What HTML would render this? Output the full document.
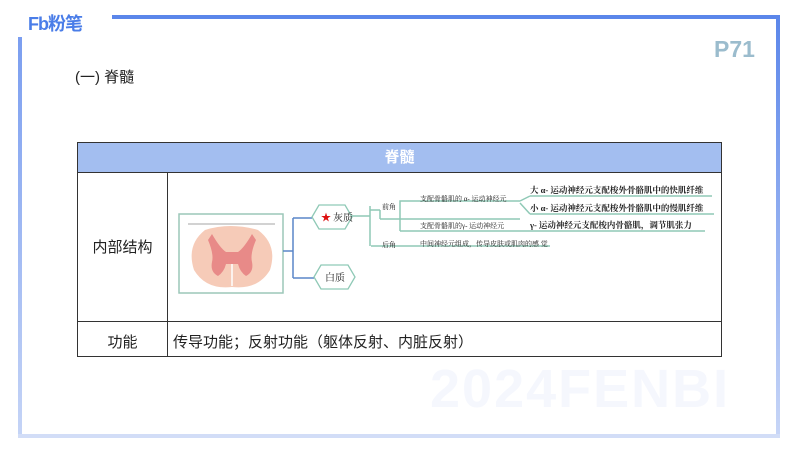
<!DOCTYPE html>
<html><head><meta charset="utf-8"><style>
body{margin:0;width:800px;height:450px;background:#fff;position:relative;overflow:hidden;font-family:"Liberation Sans","Noto Sans CJK SC",sans-serif;}
.a{position:absolute}
</style></head><body>
<div class="a" style="left:430px;top:358px;width:346px;height:70px;overflow:hidden"><div style="font-size:54px;font-weight:bold;color:#f5f7fd;letter-spacing:2px;white-space:nowrap">2024FENBI</div></div>
<div class="a" style="left:112px;top:15px;width:668px;height:4px;background:#5b86ea"></div>
<div class="a" style="left:776px;top:15px;width:4px;height:422px;background:linear-gradient(#5b86ea,#c8d6f7)"></div>
<div class="a" style="left:18px;top:37px;width:4px;height:400px;background:linear-gradient(#7b9ef0,#c5d4f6)"></div>
<div class="a" style="left:18px;top:434px;width:762px;height:4px;background:#d2ddf7"></div>
<div class="a" style="left:28px;top:10px;font-size:18px;font-weight:bold;color:#4a7de8;letter-spacing:-1px">Fb粉笔</div>
<div class="a" style="left:714px;top:36px;font-size:23px;font-weight:bold;color:#9bbccd">P71</div>
<div class="a" style="left:75px;top:66px;font-size:15px;color:#222">(一) 脊髓</div>
<div class="a" style="left:77px;top:142px;width:645px;height:215px;border:1px solid #333;box-sizing:border-box"></div>
<div class="a" style="left:78px;top:143px;width:643px;height:29px;background:#a3bef0;border-bottom:1px solid #333;color:#fff;font-size:15px;font-weight:bold;text-align:center;line-height:29px">脊髓</div>
<div class="a" style="left:167px;top:172px;width:1px;height:185px;background:#333"></div>
<div class="a" style="left:78px;top:321px;width:643px;height:1px;background:#333"></div>
<div class="a" style="left:78px;top:236px;width:89px;text-align:center;font-size:15px;color:#222">内部结构</div>
<div class="a" style="left:78px;top:331px;width:89px;text-align:center;font-size:15px;color:#222">功能</div>
<div class="a" style="left:173px;top:331px;font-size:15px;color:#222">传导功能；反射功能（躯体反射、内脏反射）</div>
<svg class="a" style="left:0;top:0" width="800" height="450">
<rect x="179" y="214" width="104" height="79" fill="#fff" stroke="#9cc7b9" stroke-width="1.5"/>
<line x1="188" y1="224" x2="275" y2="224" stroke="#888" stroke-width="0.8"/>
<path d="M205 230 Q230 222 258 230 Q278 245 270 270 Q258 290 232 287 Q206 290 194 270 Q186 245 205 230Z" fill="#f6cbb8"/>
<path d="M212 234 Q220 248 226 252 L238 252 Q244 248 252 234 L256 240 Q250 254 252 262 Q254 272 246 276 Q240 272 238 264 L226 264 Q224 272 218 276 Q210 272 212 262 Q214 254 208 240Z" fill="#e88a88"/>
<path d="M232 264 L232 286" stroke="#fff" stroke-width="1.5"/>
<g fill="none" stroke-width="1.5">
<path d="M283 251 H293 M293 218 V278 M293 218 H312 M293 278 H314" stroke="#5a86c8"/>
<path d="M352 216 H370 M370 216 V246 M370 206 V216 M370 210 H380 M380 210 V219 M371 246 H550 M380 219 H520 M400 210 V231 M400 231 H515 M400 210 V201 H520 M520 201 L530 196 M520 203 L530 214 M530 196 H712 M530 214 H714 M515 231 H705" stroke="#8fc9b6"/>
</g>
<path d="M312 217 L319 205 H345 L352 217 L345 229 H319Z" fill="#fff" stroke="#8fc9b6" stroke-width="1.3"/>
<path d="M314 277 L321 265 H348 L355 277 L348 289 H321Z" fill="#fff" stroke="#8fc9b6" stroke-width="1.3"/>
<g font-family="Liberation Serif,Noto Serif CJK SC,serif" fill="#222">
<text x="321" y="221" font-size="10" fill="#d11">★</text>
<text x="333" y="221" font-size="10">灰质</text>
<text x="325" y="281" font-size="10">白质</text>
<text x="382" y="209" font-size="7">前角</text>
<text x="382" y="247" font-size="7">后角</text>
<text x="420" y="201" font-size="7">支配骨骼肌的 α- 运动神经元</text>
<text x="420" y="228" font-size="7">支配骨骼肌的γ- 运动神经元</text>
<text x="420" y="246" font-size="7">中间神经元组成，传导皮肤或肌肉的感 觉</text>
<text x="530" y="193" font-size="8.5" font-weight="bold">大  α- 运动神经元支配梭外骨骼肌中的快肌纤维</text>
<text x="530" y="211" font-size="8.5" font-weight="bold">小  α- 运动神经元支配梭外骨骼肌中的慢肌纤维</text>
<text x="530" y="228" font-size="8.5" font-weight="bold">γ- 运动神经元支配梭内骨骼肌，调节肌张力</text>
</g>
</svg>
</body></html>
